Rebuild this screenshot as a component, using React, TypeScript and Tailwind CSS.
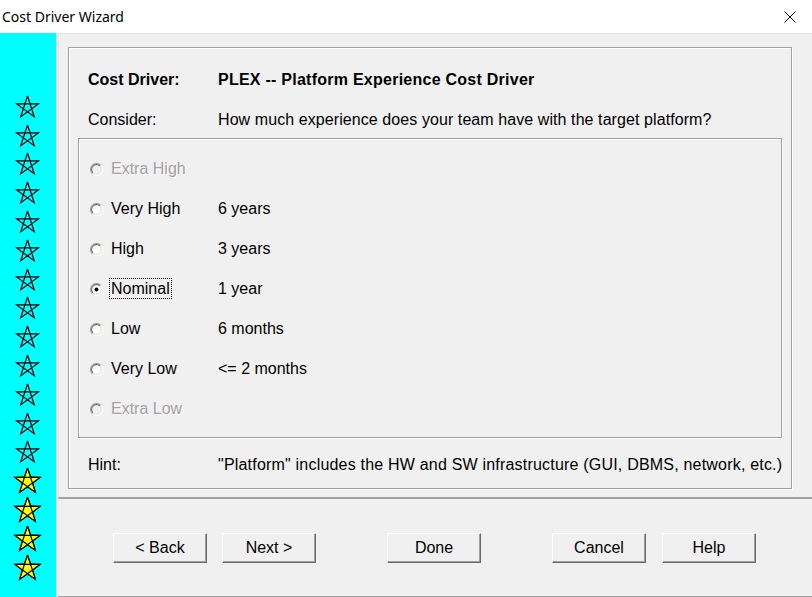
import React from 'react';

const FONT = "font-['Liberation_Sans',Arial,sans-serif]";

function Star({ filled }: { filled?: boolean }) {
  // pentagram through five outer points; the yellow ones get a filled outline under it
  const size = filled ? 29 : 25;
  const r = filled ? 13.5 : 11.5;
  const c = size / 2;
  const pts = Array.from({ length: 5 }, (_, i) => {
    const a = -Math.PI / 2 + (i * 2 * Math.PI) / 5;
    return [c + r * Math.cos(a), c + 1 + r * Math.sin(a)];
  });
  const ri = r * 0.42;
  const outline = Array.from({ length: 10 }, (_, i) => {
    const a = -Math.PI / 2 + (i * Math.PI) / 5;
    const rr = i % 2 === 0 ? r : ri;
    return `${c + rr * Math.cos(a)},${c + 1 + rr * Math.sin(a)}`;
  }).join(' ');
  const gram = [0, 2, 4, 1, 3, 0].map((i) => `${pts[i][0]},${pts[i][1]}`).join(' ');
  return (
    <svg width={size} height={size} viewBox={`0 0 ${size} ${size}`}>
      {filled && <polygon points={outline} fill="#ffff00" stroke="#000" strokeWidth={1} />}
      <polyline points={gram} fill="none" stroke="#000" strokeWidth={1.2} strokeLinejoin="miter" />
    </svg>
  );
}

function Radio({ checked, disabled }: { checked?: boolean; disabled?: boolean }) {
  return (
    <svg width="13" height="13" viewBox="0 0 13 13" className="shrink-0">
      <path d="M10.7 2.3 A5.9 5.9 0 1 0 2.3 10.7" fill="none" stroke="#a0a0a0" strokeWidth="1.2" />
      <path d="M2.3 10.7 A5.9 5.9 0 0 0 10.7 2.3" fill="none" stroke="#ffffff" strokeWidth="1.2" />
      <path d="M9.9 3.1 A4.8 4.8 0 1 0 3.1 9.9" fill="none" stroke="#696969" strokeWidth="1.2" />
      <path d="M3.1 9.9 A4.8 4.8 0 0 0 9.9 3.1" fill="none" stroke="#e3e3e3" strokeWidth="1.2" />
      <circle cx="6.5" cy="6.5" r="4.1" fill={disabled ? '#f0f0f0' : '#ffffff'} />
      {checked && <circle cx="6.5" cy="6.5" r="2" fill="#000" />}
    </svg>
  );
}

function Btn({ children }: { children: React.ReactNode }) {
  return (
    <button className="w-[94px] h-[30px] bg-[#f0f0f0] border border-t-white border-l-white border-r-[#696969] border-b-[#696969] shadow-[inset_-1px_-1px_0_#a0a0a0] text-[16px] text-black leading-none">
      {children}
    </button>
  );
}

const ratings = [
  { label: 'Extra High', value: '', disabled: true },
  { label: 'Very High', value: '6 years' },
  { label: 'High', value: '3 years' },
  { label: 'Nominal', value: '1 year', checked: true },
  { label: 'Low', value: '6 months' },
  { label: 'Very Low', value: '<= 2 months' },
  { label: 'Extra Low', value: '', disabled: true },
];

export default function App() {
  return (
    <div className={`w-[812px] h-[597px] bg-[#f0f0f0] flex flex-col overflow-hidden ${FONT}`}>
      {/* Title bar */}
      <div className="h-[33px] bg-white flex items-center justify-between shrink-0">
        <span className="pl-[2px] text-[14px] text-black font-['Noto_Sans',sans-serif]">Cost Driver Wizard</span>
        <svg width="12" height="12" viewBox="0 0 12 12" className="mr-[16px]">
          <path d="M0.5 0.5 L11.5 11.5 M11.5 0.5 L0.5 11.5" stroke="#000" strokeWidth="1" />
        </svg>
      </div>

      <div className="flex flex-1 min-h-0">
        {/* Star strip */}
        <div className="w-[56px] bg-[#00ffff] flex flex-col items-center pt-[59px] pr-[2px] shrink-0">
          {Array.from({ length: 17 }, (_, i) => (
            <div key={i} className="h-[28.8px] flex items-center justify-center">
              <Star filled={i >= 13} />
            </div>
          ))}
        </div>

        <div className="flex-1 flex flex-col border-l border-[#dcdcdc] pl-[1px] pr-[2px]">
          {/* Main panel */}
          <div className="h-[466px] border-t border-l border-[#e3e3e3] border-r-2 border-r-[#a0a0a0] border-b-2 border-b-[#a0a0a0] pt-[13px] pl-[9px] pr-[20px] pb-[8px] flex">
            <div className="flex-1 min-w-0 border border-[#a0a0a0] shadow-[inset_1px_1px_0_#fff,1px_1px_0_#fff] flex flex-col pl-[19px] pr-[9px] pt-[12px]">
              <div className="h-[40px] flex items-center text-[16px] font-bold text-black">
                <span className="w-[130px] shrink-0">Cost Driver:</span>
                <span className="tracking-[0.25px]">PLEX -- Platform Experience Cost Driver</span>
              </div>
              <div className="h-[40px] flex items-center text-[16px] text-black">
                <span className="w-[130px] shrink-0">Consider:</span>
                <span className="tracking-[0.08px]">How much experience does your team have with the target platform?</span>
              </div>

              <div className="-ml-[10px] -mt-[2px] h-[300px] border border-[#a0a0a0] shadow-[inset_1px_1px_0_#fff,1px_1px_0_#fff] pt-[10px] pl-[11px]">
                {ratings.map((r) => (
                  <div key={r.label} className="h-[40px] flex items-center text-[16px]">
                    <Radio checked={r.checked} disabled={r.disabled} />
                    <span className="w-[115px] pl-[8px]">
                      <span
                        className={
                          r.disabled
                            ? 'text-[#a0a0a0] [text-shadow:1px_1px_0_#fff]'
                            : r.checked
                            ? 'text-black outline outline-1 outline-dotted outline-black -ml-[1px] px-[1px] py-[1px]'
                            : 'text-black'
                        }
                      >
                        {r.label}
                      </span>
                    </span>
                    <span className="text-black">{r.value}</span>
                  </div>
                ))}
              </div>

              <div className="h-[50px] flex items-center text-[16px] text-black pt-[4px] whitespace-nowrap">
                <span className="w-[130px] shrink-0">Hint:</span>
                <span className="tracking-[0.2px]">"Platform" includes the HW and SW infrastructure (GUI, DBMS, network, etc.)</span>
              </div>
            </div>
          </div>

          {/* Buttons */}
          <div className="flex-1 border-r border-b border-[#a0a0a0] flex items-center pl-[55px]">
            <Btn>&lt; Back</Btn>
            <div className="w-[15px]" />
            <Btn>Next &gt;</Btn>
            <div className="w-[71px]" />
            <Btn>Done</Btn>
            <div className="w-[71px]" />
            <Btn>Cancel</Btn>
            <div className="w-[16px]" />
            <Btn>Help</Btn>
          </div>
        </div>
      </div>
    </div>
  );
}
